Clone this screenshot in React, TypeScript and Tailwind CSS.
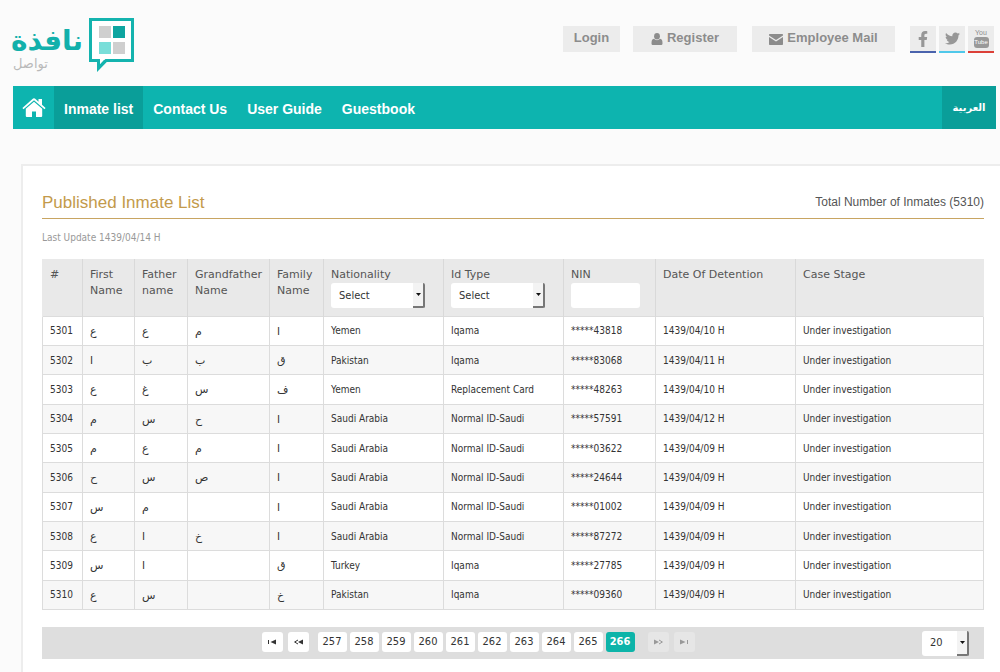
import type { ReactNode } from "react";
import { FaFacebookF, FaTwitter } from "react-icons/fa";

type Inmate = {
  id: number;
  first: string;
  father: string;
  grandfather: string;
  family: string;
  nationality: string;
  idType: string;
  nin: string;
  date: string;
};

const inmates: Inmate[] = [
  { id: 5301, first: "ع", father: "ع", grandfather: "م", family: "ا", nationality: "Yemen", idType: "Iqama", nin: "43818", date: "10" },
  { id: 5302, first: "ا", father: "ب", grandfather: "ب", family: "ق", nationality: "Pakistan", idType: "Iqama", nin: "83068", date: "11" },
  { id: 5303, first: "ع", father: "غ", grandfather: "س", family: "ف", nationality: "Yemen", idType: "Replacement Card", nin: "48263", date: "10" },
  { id: 5304, first: "م", father: "س", grandfather: "ح", family: "ا", nationality: "Saudi Arabia", idType: "Normal ID-Saudi", nin: "57591", date: "12" },
  { id: 5305, first: "م", father: "ع", grandfather: "م", family: "ا", nationality: "Saudi Arabia", idType: "Normal ID-Saudi", nin: "03622", date: "09" },
  { id: 5306, first: "ح", father: "س", grandfather: "ص", family: "ا", nationality: "Saudi Arabia", idType: "Normal ID-Saudi", nin: "24644", date: "09" },
  { id: 5307, first: "س", father: "م", grandfather: "", family: "ا", nationality: "Saudi Arabia", idType: "Normal ID-Saudi", nin: "01002", date: "09" },
  { id: 5308, first: "ع", father: "ا", grandfather: "خ", family: "ا", nationality: "Saudi Arabia", idType: "Normal ID-Saudi", nin: "87272", date: "09" },
  { id: 5309, first: "س", father: "ا", grandfather: "", family: "ق", nationality: "Turkey", idType: "Iqama", nin: "27785", date: "09" },
  { id: 5310, first: "ع", father: "س", grandfather: "", family: "خ", nationality: "Pakistan", idType: "Iqama", nin: "09360", date: "09" },
];

const pages = [257, 258, 259, 260, 261, 262, 263, 264, 265, 266];

function Logo() {
  return (
    <a href="#" className="flex items-start gap-[6px]">
      <span dir="rtl" className="flex w-[70px] flex-col pt-[9px] font-['DejaVu_Sans',sans-serif]">
        <span className="text-[28px] leading-[28px] font-bold text-[#12b0ab]">نافذة</span>
        <span className="self-end text-[13px] leading-[17px] text-[#b9b9b9]">تواصل</span>
      </span>
      <svg width="46" height="56" viewBox="0 0 46 56" aria-hidden="true">
        <path d="M1.500 1.500H43.500V42.500H17L9.500 50V42.500H1.500Z" fill="#fff" stroke="#14b3ae" strokeWidth="3" />
        <path d="M8 41H11V46.500L15 42H19.500L8 54Z" fill="#14b3ae" />
        <rect x="10" y="8" width="12" height="12" fill="#cfcfcf" />
        <rect x="24" y="8" width="12" height="12" fill="#0ea5a0" />
        <rect x="10" y="24" width="12" height="12" fill="#79ded9" />
        <rect x="24" y="24" width="12" height="12" fill="#cfcfcf" />
      </svg>
    </a>
  );
}

function HomeIcon() {
  return (
    <svg width="24" height="20" viewBox="0 0 24 20" fill="#fff" aria-hidden="true">
      <path d="M12 .3Q12.800.3 13.500 1L16.500 3.700V1H20V6.700L23.600 9.900 22.500 11.200 12 2.200 1.500 11.200.4 9.900 10.500 1Q11.200.3 12 .3Z" />
      <path d="M12 3.800 3.800 10.800V18Q3.800 19 4.800 19H10V13.500H14V19H19.200Q20.200 19 20.200 18V10.800Z" />
    </svg>
  );
}

function UserIcon() {
  return (
    <svg width="12" height="12" viewBox="0 0 12 12" fill="#8c8c8c" aria-hidden="true">
      <ellipse cx="6" cy="3.300" rx="2.900" ry="3.300" />
      <path d="M3 5.800C1 6 .5 7.500.5 10.500.5 11.500 1.200 12 2.200 12H9.800C10.800 12 11.500 11.500 11.500 10.500 11.500 7.500 11 6 9 5.800 7.500 7.600 4.500 7.600 3 5.800Z" />
    </svg>
  );
}

function MailIcon() {
  return (
    <svg width="14" height="11" viewBox="0 0 14 11" fill="#8c8c8c" aria-hidden="true">
      <path d="M1 0H13C13.600 0 14 .4 14 1V1.600L7 6 0 1.600V1C0 .4.4 0 1 0Z" />
      <path d="M0 3 7 7.500 14 3V10C14 10.600 13.600 11 13 11H1C.4 11 0 10.600 0 10Z" />
    </svg>
  );
}

function YoutubeIcon() {
  return (
    <span className="flex flex-col items-center font-normal font-['Liberation_Sans_Narrow','Liberation_Sans',sans-serif]">
      <span className="text-[7px] leading-[8px] text-[#8c8c8c]">You</span>
      <span className="flex h-[11px] w-[15px] items-center justify-center rounded-[3px] bg-[#999] text-[6px] leading-[7px] text-white">
        Tube
      </span>
    </span>
  );
}

function Social({ label, line, children }: { label: string; line: string; children: ReactNode }) {
  return (
    <a href="#" aria-label={label} className={`flex h-[27px] w-[26px] items-center justify-center border-b-2 bg-[#ececec] text-[#979797] ${line}`}>
      {children}
    </a>
  );
}

function SelectBox({ label, value, width }: { label: string; value: string; width: string }) {
  return (
    <span className={`relative block h-[25px] ${width}`}>
      <select
        aria-label={label}
        className="h-full w-full appearance-none rounded-[3px] bg-white pl-2 font-['DejaVu_Sans_Condensed','DejaVu_Sans',sans-serif] text-[11px] text-[#333]"
      >
        <option>{value}</option>
      </select>
      <span className="pointer-events-none absolute inset-y-0 right-0 flex w-3 items-center justify-center rounded-r-[2px] border-r-2 border-b-2 border-[#777] bg-[#f3f3f3]">
        <svg width="5" height="3" viewBox="0 0 5 3" aria-hidden="true">
          <path d="M0 0H5L2.500 3Z" fill="#111" />
        </svg>
      </span>
    </span>
  );
}

function Th({ width, children }: { width?: string; children: ReactNode }) {
  return (
    <th scope="col" className={`border-x border-[#d9d9d9] px-[7px] pt-2 text-left align-top font-normal first:border-l-[#e9e9e9] last:border-r-[#e9e9e9] ${width ?? ""}`}>
      {children}
    </th>
  );
}

function Td({ children }: { children: ReactNode }) {
  return <td className="border border-[#dcdcdc] px-[7px] pt-[1px]">{children}</td>;
}

function NameTd({ children }: { children: ReactNode }) {
  return (
    <td lang="ar" className="border border-[#dcdcdc] px-[7px] pt-[2px] font-['DejaVu_Sans',sans-serif] text-[11px]">
      {children}
    </td>
  );
}

function PageArrow({ label, disabled, children }: { label: string; disabled?: boolean; children: ReactNode }) {
  return (
    <button
      type="button"
      aria-label={label}
      disabled={disabled}
      className="flex h-5 w-[21px] items-center justify-center rounded-[3px] bg-white text-[#333] disabled:bg-[#e6e6e6] disabled:text-[#999]"
    >
      {children}
    </button>
  );
}

function FirstGlyph() {
  return (
    <svg width="8" height="6" viewBox="0 0 8 6" aria-hidden="true">
      <path d="M0 1H1V5H0ZM8 .5V5.500L2.500 3Z" fill="currentColor" />
    </svg>
  );
}

function PrevGlyph() {
  return (
    <svg width="9" height="6" viewBox="0 0 9 6" aria-hidden="true">
      <path d="M4 1 .6 3 4 5" fill="none" stroke="currentColor" strokeWidth="1" />
      <path d="M9 .5V5.500L4 3Z" fill="currentColor" />
    </svg>
  );
}

export default function App() {
  return (
    <div className="flex min-h-screen flex-col bg-[#fbfbfb] font-['Liberation_Sans',Arial,sans-serif]">
      <header className="pr-1 pl-[13px]">
        <div className="flex h-[86px] items-start justify-between pt-[18px]">
          <Logo />
          <div className="flex items-start pt-2 pr-[2px] text-[13px] font-bold text-[#8c8c8c]">
            <a href="#" className="mr-[13px] flex h-[26px] w-[57px] items-center justify-center bg-[#ececec] pb-[2px]">
              Login
            </a>
            <a href="#" className="mr-[15px] flex h-[26px] w-[104px] items-center justify-center gap-1 bg-[#ececec] pb-[2px]">
              <span className="pt-[2px]"><UserIcon /></span>
              Register
            </a>
            <a href="#" className="mr-[15px] flex h-[26px] w-[143px] items-center justify-center gap-1 bg-[#ececec] pb-[2px]">
              <span className="pt-[2px]"><MailIcon /></span>
              Employee Mail
            </a>
            <div className="flex gap-[3px]">
              <Social label="Facebook" line="border-[#4a63ad]"><FaFacebookF size={16} /></Social>
              <Social label="Twitter" line="border-[#4fc8ea]"><FaTwitter size={15} /></Social>
              <Social label="YouTube" line="border-[#dc4038]"><YoutubeIcon /></Social>
            </div>
          </div>
        </div>
        <nav className="flex h-[43px] items-stretch bg-[#0db4af] text-[14px] font-bold text-white">
          <a href="#" aria-label="Home" className="flex w-[41px] items-center justify-center"><HomeIcon /></a>
          <a href="#" className="flex items-center bg-[#0a9e99] px-[10px] pt-1">Inmate list</a>
          <a href="#" className="flex items-center px-[10px] pt-1">Contact Us</a>
          <a href="#" className="flex items-center px-[10px] pt-1">User Guide</a>
          <a href="#" className="flex items-center px-[10px] pt-1">Guestbook</a>
          <a href="#" lang="ar" className="ml-auto flex w-[54px] items-center justify-center bg-[#0a9e99] font-['DejaVu_Sans',sans-serif] text-[10px]">
            العربية
          </a>
        </nav>
      </header>

      <main className="mt-[35px] ml-[21px] grow border-t-2 border-l-2 border-[#ededed] bg-white pt-[25px] pr-4 pb-[13px] pl-[19px]">
        <div className="flex items-start justify-between border-b border-[#c8a562] pb-[4px]">
          <h1 className="text-[17px] leading-[23px] text-[#c39a4b]">Published Inmate List</h1>
          <p className="text-[12px] leading-[22px] text-[#555]">Total Number of Inmates (5310)</p>
        </div>
        <p className="mt-[11px] font-['DejaVu_Sans_Condensed','DejaVu_Sans',sans-serif] text-[10px] leading-4 text-[#999]">
          Last Update 1439/04/14 H
        </p>

        <table className="mt-[13px] h-[351px] w-full table-fixed border-collapse font-['DejaVu_Sans_Condensed','DejaVu_Sans',sans-serif] text-[10px] leading-4 text-[#333]">
          <thead className="h-[57px] bg-[#e9e9e9] font-['DejaVu_Sans',sans-serif] text-[11px] text-[#555]">
            <tr className="h-[57px]">
              <Th width="w-[40px]">#</Th>
              <Th width="w-[52px]">First Name</Th>
              <Th width="w-[53px]">Father name</Th>
              <Th width="w-[82px]">Grandfather Name</Th>
              <Th width="w-[54px]">Family Name</Th>
              <Th width="w-[120px]">
                Nationality
                <SelectBox label="Nationality" value="Select" width="w-[94px]" />
              </Th>
              <Th width="w-[120px]">
                Id Type
                <SelectBox label="Id Type" value="Select" width="w-[94px]" />
              </Th>
              <Th width="w-[92px]">
                <label htmlFor="nin">NIN</label>
                <input id="nin" type="text" className="block h-[25px] w-[69px] rounded-[3px] bg-white px-2 text-[11px]" />
              </Th>
              <Th width="w-[140px]">Date Of Detention</Th>
              <Th>Case Stage</Th>
            </tr>
          </thead>
          <tbody>
            {inmates.map((p) => (
              <tr key={p.id} className="even:bg-[#f7f7f7]">
                <Td>{p.id}</Td>
                <NameTd>{p.first}</NameTd>
                <NameTd>{p.father}</NameTd>
                <NameTd>{p.grandfather}</NameTd>
                <NameTd>{p.family}</NameTd>
                <Td>{p.nationality}</Td>
                <Td>{p.idType}</Td>
                <Td>*****{p.nin}</Td>
                <Td>1439/04/{p.date} H</Td>
                <Td>Under investigation</Td>
              </tr>
            ))}
          </tbody>
        </table>

        <div className="mt-[17px] flex h-8 items-center bg-[#dedede] pr-[15px] font-['DejaVu_Sans_Condensed','DejaVu_Sans',sans-serif] text-[11px]">
          <div className="flex grow items-center justify-center gap-[5px] pr-[8px] pb-[2px]">
            <PageArrow label="First page"><FirstGlyph /></PageArrow>
            <PageArrow label="Previous page"><PrevGlyph /></PageArrow>
            <div className="mr-2 ml-1 flex gap-[3px]">
              {pages.map((n) => (
                <button
                  key={n}
                  type="button"
                  className={n === 266 ? "h-5 w-[29px] rounded-[3px] bg-[#0db4a9] font-bold text-white" : "h-5 w-[29px] rounded-[3px] bg-white text-[#333]"}
                >
                  {n}
                </button>
              ))}
            </div>
            <PageArrow label="Next page" disabled><span className="rotate-180"><PrevGlyph /></span></PageArrow>
            <PageArrow label="Last page" disabled><span className="rotate-180"><FirstGlyph /></span></PageArrow>
          </div>
          <SelectBox label="Rows per page" value="20" width="w-[47px]" />
        </div>
      </main>
    </div>
  );
}
